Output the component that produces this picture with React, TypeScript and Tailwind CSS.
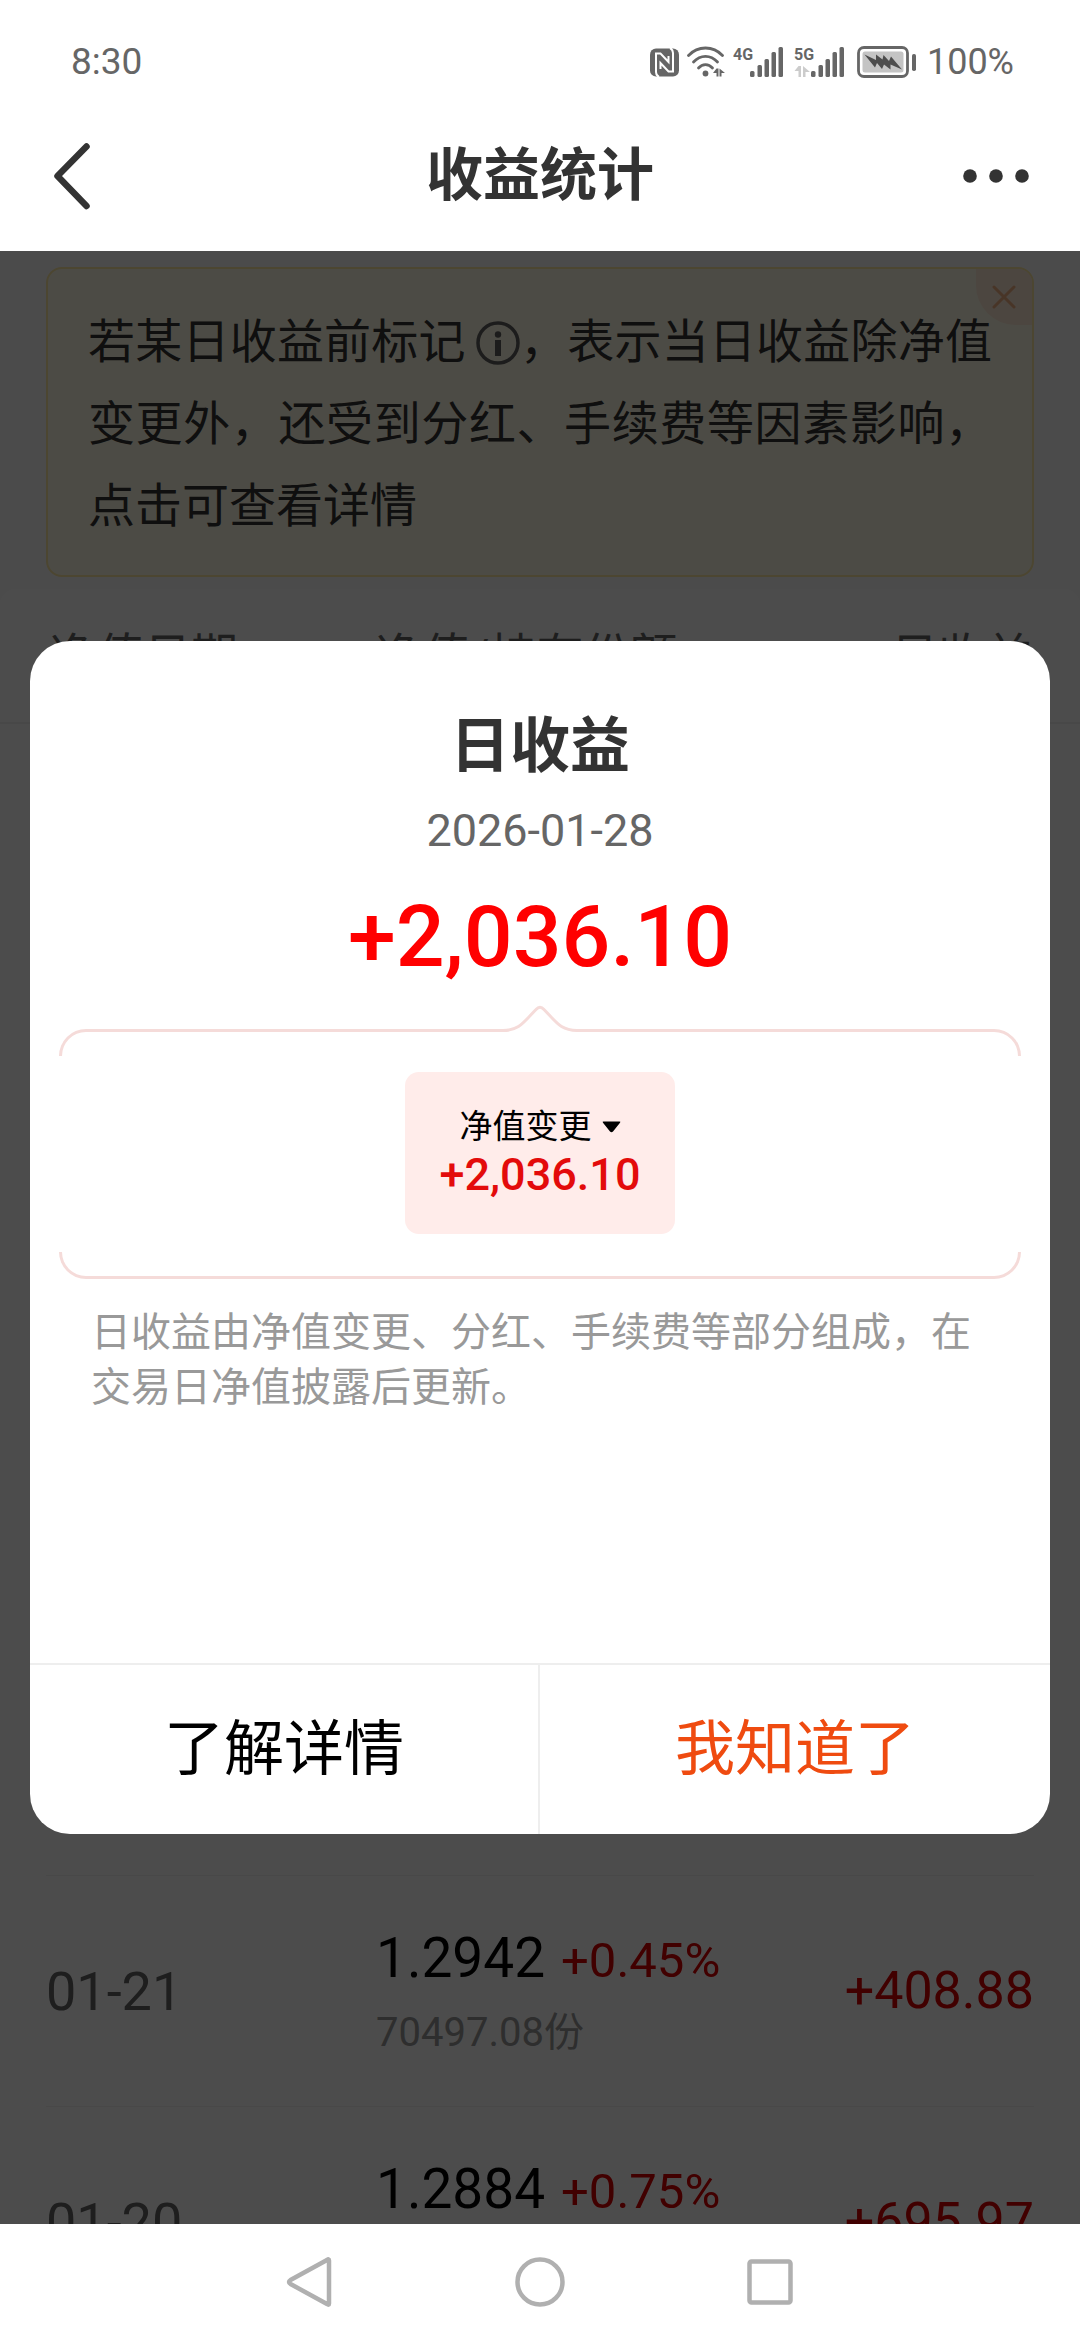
import type { ReactNode } from "react";

type Row = { date: string; nav: string; change: string; shares: string; profit: string };

const rows: Row[] = [
  { date: "01-21", nav: "1.2942", change: "+0.45%", shares: "70497.08份", profit: "+408.88" },
  { date: "01-20", nav: "1.2884", change: "+0.75%", shares: "70497.08份", profit: "+695.97" },
];

function NfcIcon() {
  return (
    <svg width="29" height="29" viewBox="0 0 29 29" aria-label="NFC">
      <rect x="0" y="0.5" width="29" height="28" rx="6" fill="#666" />
      <g fill="none" stroke="#fff" strokeWidth="2">
        <path d="M9 29Q6 27.500 6 24V5.500h4.500l8 8.500V8" />
        <path d="M20 0Q23 1.500 23 5V23.500h-4.500l-8-8.500V21" />
      </g>
    </svg>
  );
}

function WifiIcon() {
  return (
    <svg width="38" height="32" viewBox="0 0 38 32" aria-label="Wi-Fi">
      <g fill="none" stroke="#666" strokeWidth="2.8" strokeLinecap="round">
        <path d="M1.500 9.500C11 -0.500 26 -0.500 35.500 9.500" />
        <path d="M6.500 16C13.500 8.500 23.500 8.500 30.500 16" />
        <path d="M11.500 22C15.500 17.500 21.500 17.500 25.500 22" />
      </g>
      <circle cx="18.500" cy="27.500" r="2.900" fill="#666" />
      <path d="M29.500 22.500v8h2v-8zM29.500 22.500l-3.500 4.500h3.500zM32.500 22.500v8h2v-3.500h3.500z" fill="#666" />
    </svg>
  );
}

function SignalIcon({ label, arrows }: { label: string; arrows?: boolean }) {
  return (
    <svg width="51" height="32" viewBox="0 0 51 32" aria-label={label}>
      <text x="0" y="14" fontFamily="Roboto" fontWeight="700" fontSize="16" fill="#666">
        {label}
      </text>
      {arrows && (
        <path d="M4.500 20v11h2.500v-11zM4.500 20l-4 5h4zM9 20v11h2.500v-5h4.500z" fill="#ccc" />
      )}
      <g fill="#666">
        <rect x="17" y="25" width="4.500" height="6" rx="1.500" />
        <rect x="24.500" y="19" width="4.500" height="12" rx="1.500" />
        <rect x="31.500" y="13" width="4.500" height="18" rx="1.500" />
        <rect x="38.500" y="6" width="4.500" height="25" rx="1.500" />
        <rect x="45.500" y="1" width="4.500" height="30" rx="1.500" />
      </g>
    </svg>
  );
}

function BatteryIcon() {
  return (
    <svg width="60" height="32" viewBox="0 0 60 32" aria-label="充电中">
      <rect x="1.500" y="1.500" width="49" height="29" rx="5.500" fill="none" stroke="#666" strokeWidth="2.800" />
      <rect x="5.500" y="5.500" width="41" height="21" rx="2.500" fill="#c4c4c4" />
      <path d="M7.500 8.500L19 14l0-5.500 6.500 5 1-4.500 5.500 6 2-4.500L45 23.500l-11.500-5v5l-6.500-5-2 4.500-5-6-2 4.500z" fill="#4d4d4d" />
      <rect x="55" y="8" width="4" height="17" rx="1.800" fill="#666" />
    </svg>
  );
}

function InfoIcon() {
  return (
    <svg className="mb-1.5 ml-2.5 inline-block align-middle" width="44" height="44" viewBox="0 0 44 44" aria-label="说明">
      <circle cx="22" cy="22" r="20" fill="none" stroke="#606060" strokeWidth="3.500" />
      <circle cx="22" cy="13.500" r="3.200" fill="#606060" />
      <rect x="19" y="19" width="6" height="16" fill="#606060" />
    </svg>
  );
}

function NavButton({ label, children }: { label: string; children: ReactNode }) {
  return (
    <button type="button" aria-label={label} className="flex w-[230px] items-center justify-center">
      <svg width="54" height="54" viewBox="0 0 54 54" fill="none" stroke="#b0b0b0" strokeWidth="4.500" strokeLinejoin="round">
        {children}
      </svg>
    </button>
  );
}

function StatusBar() {
  return (
    <div className="flex h-[100px] shrink-0 items-end justify-between pr-[66px] pb-[18px] pl-[71px] text-[#666]">
      <span className="text-[37px] leading-10">8:30</span>
      <div className="flex items-center text-[36px] leading-10">
        <NfcIcon />
        <span className="ml-2 flex"><WifiIcon /></span>
        <span className="ml-2 flex"><SignalIcon label="4G" /></span>
        <span className="ml-2.5 flex"><SignalIcon label="5G" arrows /></span>
        <span className="ml-3 flex"><BatteryIcon /></span>
        <span className="ml-2.5">100%</span>
      </div>
    </div>
  );
}

function TitleBar() {
  return (
    <header className="flex h-[151px] shrink-0 items-center justify-between px-[51px] text-[#333]">
      <button type="button" aria-label="返回" className="flex w-20">
        <svg width="42" height="68" viewBox="0 0 42 68" fill="none" stroke="currentColor" strokeWidth="6.500" strokeLinecap="round" strokeLinejoin="round">
          <path d="M35.500 4.500L6.500 34l29 30" />
        </svg>
      </button>
      <h1 className="text-[57px] leading-[80px] font-bold">收益统计</h1>
      <button type="button" aria-label="更多" className="flex w-20 justify-end">
        <svg width="66" height="14" viewBox="0 0 66 14" fill="currentColor">
          <circle cx="7" cy="7" r="6.800" />
          <circle cx="33" cy="7" r="6.800" />
          <circle cx="59" cy="7" r="6.800" />
        </svg>
      </button>
    </header>
  );
}

function Notice() {
  return (
    <div className="relative mx-[46px] mt-4 mb-3 rounded-2xl border-2 border-[#ffeaa3] bg-[#fffbe6] px-10 pt-8 pb-7">
      <p className="text-justify text-[47px] leading-[82px] text-[#333]">
        若某日收益前标记
        <InfoIcon />
        ，表示当日收益除净值变更外，还受到分红、手续费等因素影响，点击可查看详情
      </p>
      <button type="button" aria-label="关闭提示" className="absolute top-0 right-0 flex size-14 items-center justify-center rounded-tr-[14px] rounded-bl-[40px] bg-[#ffe9d6]">
        <svg width="24" height="24" viewBox="0 0 24 24" stroke="#f2b283" strokeWidth="3" strokeLinecap="round">
          <path d="M2 2l20 20M22 2L2 22" />
        </svg>
      </button>
    </div>
  );
}

function HistoryTable() {
  return (
    <table className="w-full table-fixed rounded-t-2xl bg-white text-left">
      <colgroup>
        <col className="w-[376px]" />
        <col />
        <col className="w-[280px]" />
      </colgroup>
      <thead>
        <tr className="h-[134px] border-b-2 border-[#f0f0f0] text-[47px] leading-[60px] text-[#666]">
          <th className="pl-[50px] font-normal">净值日期</th>
          <th className="font-normal whitespace-nowrap">净值/持有份额</th>
          <th className="pr-[48px] text-right font-normal">日收益</th>
        </tr>
      </thead>
      <tbody>
        <tr aria-hidden="true">
          <td colSpan={3} className="px-[46px]">
            <div className="h-[1152px] border-b border-[#f0f0f0]" />
          </td>
        </tr>
        {rows.map((row) => (
          <tr key={row.date}>
            <td className="pl-[46px]">
              <div className="flex h-[231px] items-center border-b border-[#f0f0f0] text-[54px] text-[#666]">{row.date}</div>
            </td>
            <td>
              <div className="flex h-[231px] flex-col justify-center border-b border-[#f0f0f0] pt-2 leading-[72px] whitespace-nowrap">
                <div className="flex items-baseline gap-4">
                  <span className="text-[55px] text-black">{row.nav}</span>
                  <span className="text-[49px] text-[#d90000]">{row.change}</span>
                </div>
                <div className="text-[40px] text-[#999]">{row.shares}</div>
              </div>
            </td>
            <td className="pr-[46px]">
              <div className="flex h-[231px] items-center justify-end border-b border-[#f0f0f0] text-[52px] text-[#d90000]">{row.profit}</div>
            </td>
          </tr>
        ))}
      </tbody>
    </table>
  );
}

function ProfitDialog() {
  return (
    <section role="dialog" aria-modal="true" aria-labelledby="profit-title" className="w-full overflow-hidden rounded-[40px] bg-white">
      <div className="px-[29px] pt-[66px] pb-[248px] text-center">
        <h2 id="profit-title" className="text-[60px] leading-[80px] font-bold text-[#333]">日收益</h2>
        <p className="mt-3.5 text-[45px] leading-[60px] text-[#666]">2026-01-28</p>
        <p className="mt-[26px] text-[86px] leading-[100px] font-medium text-[#ff0000]">+2,036.10</p>

        <div className="mt-[18px] flex items-end" aria-hidden="true">
          <div className="h-[27px] flex-1 rounded-tl-[27px] border-t-[3px] border-l-[3px] border-[#f5dbd9]" />
          <svg width="74" height="51" viewBox="0 0 74 51" fill="none" stroke="#f5dbd9" strokeWidth="3">
            <path d="M0 25.500C16 25.500 20 18 33 4.500Q37 0 41 4.500C54 18 58 25.500 74 25.500" />
          </svg>
          <div className="h-[27px] flex-1 rounded-tr-[27px] border-t-[3px] border-r-[3px] border-[#f5dbd9]" />
        </div>
        <button type="button" className="mx-auto mt-4 flex h-[162px] w-[270px] flex-col items-center justify-center rounded-[14px] bg-[#ffecea] pb-1">
          <span className="flex items-center gap-2.5 text-[33px] leading-[48px] text-black">
            净值变更
            <svg width="19" height="12" viewBox="0 0 19 12">
              <path d="M1.500 0.500h16q1.500 0 0.500 1.200l-7 8.800q-1.500 1.400-3 0l-7-8.800q-1-1.200 0.500-1.200z" />
            </svg>
          </span>
          <span className="text-[45px] leading-[48px] font-medium text-[#e30b0b]">+2,036.10</span>
        </button>
        <div className="mt-[18px] h-[27px] rounded-b-[27px] border-x-[3px] border-b-[3px] border-[#f5dbd9]" />

        <p className="mt-[26px] px-8 text-left text-[40px] leading-[55px] text-[#999]">
          日收益由净值变更、分红、手续费等部分组成，在交易日净值披露后更新。
        </p>
      </div>
      <div className="grid grid-cols-2 border-t-2 border-[#eee] text-[60px] leading-[80px]">
        <button type="button" className="border-r-2 border-[#eee] pt-[45px] pb-11 text-black">了解详情</button>
        <button type="button" className="pt-[45px] pb-11 text-[#ef4b10]">我知道了</button>
      </div>
    </section>
  );
}

export default function App() {
  return (
    <div className="flex h-screen flex-col overflow-hidden bg-white font-['Roboto','Noto_Sans_CJK_SC',sans-serif]" lang="zh-CN">
      <StatusBar />
      <TitleBar />
      <main className="relative flex min-h-0 flex-1 flex-col overflow-hidden bg-[#fcfcfc]">
        <div className="shrink-0">
          <Notice />
          <HistoryTable />
        </div>
        <div className="absolute inset-0 flex items-center bg-black/70 px-[30px]">
          <ProfitDialog />
        </div>
      </main>
      <nav className="flex h-[116px] shrink-0 justify-center" aria-label="系统导航">
        <NavButton label="返回">
          <path d="M46 5.500v43q0 2-2 0.500L7.500 29q-3-2 0-4L44 5q2-1.500 2 0.500z" />
        </NavButton>
        <NavButton label="主页">
          <circle cx="27" cy="27" r="22.500" />
        </NavButton>
        <NavButton label="最近任务">
          <rect x="6.500" y="6.500" width="41" height="41" rx="2" />
        </NavButton>
      </nav>
    </div>
  );
}
